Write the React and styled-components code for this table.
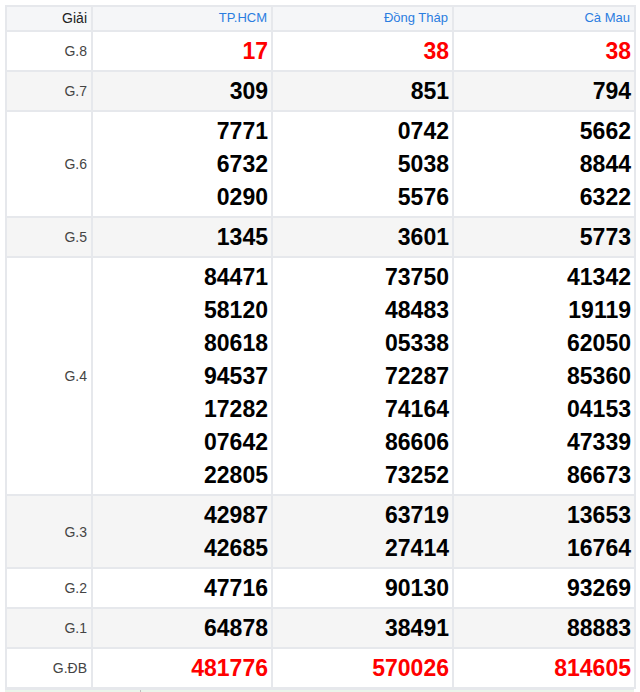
import styled, { createGlobalStyle } from 'styled-components';

const GlobalStyle = createGlobalStyle`
  body {
    margin: 0;
    background: #ffffff;
    font-family: "Liberation Sans", Arial, sans-serif;
  }
`

const provinces = ['TP.HCM', 'Đồng Tháp', 'Cà Mau'];

const rows = [
  { label: 'G.8', red: true, values: [['17'], ['38'], ['38']] },
  { label: 'G.7', values: [['309'], ['851'], ['794']] },
  { label: 'G.6', values: [['7771', '6732', '0290'], ['0742', '5038', '5576'], ['5662', '8844', '6322']] },
  { label: 'G.5', values: [['1345'], ['3601'], ['5773']] },
  {
    label: 'G.4',
    values: [
      ['84471', '58120', '80618', '94537', '17282', '07642', '22805'],
      ['73750', '48483', '05338', '72287', '74164', '86606', '73252'],
      ['41342', '19119', '62050', '85360', '04153', '47339', '86673'],
    ],
  },
  { label: 'G.3', values: [['42987', '42685'], ['63719', '27414'], ['13653', '16764']] },
  { label: 'G.2', values: [['47716'], ['90130'], ['93269']] },
  { label: 'G.1', values: [['64878'], ['38491'], ['88883']] },
  { label: 'G.ĐB', red: true, values: [['481776'], ['570026'], ['814605']] },
];

function App() {
  return (
    <Page>
      <GlobalStyle />
      <ResultTable>
        <colgroup>
          <col style={{ width: 86 }} />
          <col style={{ width: 180 }} />
          <col style={{ width: 181 }} />
          <col style={{ width: 182 }} />
        </colgroup>
        <thead>
          <tr>
            <HeadCell>Giải</HeadCell>
            {provinces.map((p) => (
              <HeadCell key={p} $province>{p}</HeadCell>
            ))}
          </tr>
        </thead>
        <tbody>
          {rows.map((row, i) => (
            <PrizeRow key={row.label} $shaded={i % 2 === 1}>
              <LabelCell>{row.label}</LabelCell>
              {row.values.map((list, j) => (
                <NumberCell key={j}>
                  {list.map((n) => (
                    <Number key={n} $red={row.red}>{n}</Number>
                  ))}
                </NumberCell>
              ))}
            </PrizeRow>
          ))}
        </tbody>
      </ResultTable>
      <NextBar>
        <NextCell />
      </NextBar>
    </Page>
  )
}

export default App

const Page = styled.div`
  padding: 5px 6px 0 5px;
  display: flex;
  flex-direction: column;
`
const ResultTable = styled.table`
  width: 629px;
  border-collapse: collapse;
  table-layout: fixed;
  border: 2px solid #e6e8ec;
`
const HeadCell = styled.th`
  background: #f5f6f8;
  border: 2px solid #e6e8ec;
  padding: 1px 4px 2px 4px;
  line-height: 20px;
  text-align: right;
  font-size: ${(p) => (p.$province ? '13px' : '14px')};
  font-weight: normal;
  color: ${(p) => (p.$province ? '#2b7de0' : '#222222')};
`
const PrizeRow = styled.tr`
  background: ${(p) => (p.$shaded ? '#f5f5f5' : '#ffffff')};
`
const LabelCell = styled.td`
  border: 2px solid #e6e8ec;
  padding: 0 4px 0 4px;
  text-align: right;
  vertical-align: middle;
  font-size: 14px;
  color: #444444;
`
const NumberCell = styled.td`
  border: 2px solid #e6e8ec;
  padding: 3px 3px 2px 4px;
  text-align: right;
  vertical-align: middle;
`
const Number = styled.div`
  font-size: 23px;
  font-weight: bold;
  line-height: 33px;
  color: ${(p) => (p.$red ? '#ff0000' : '#000000')};
`
const NextBar = styled.div`
  display: flex;
  width: 629px;
  height: 6px;
  background: #eaf4ea;
  border-top: 1px solid #e6e8ec;
`
const NextCell = styled.div`
  width: 135px;
  border-right: 1px solid #bdbdbd;
`
